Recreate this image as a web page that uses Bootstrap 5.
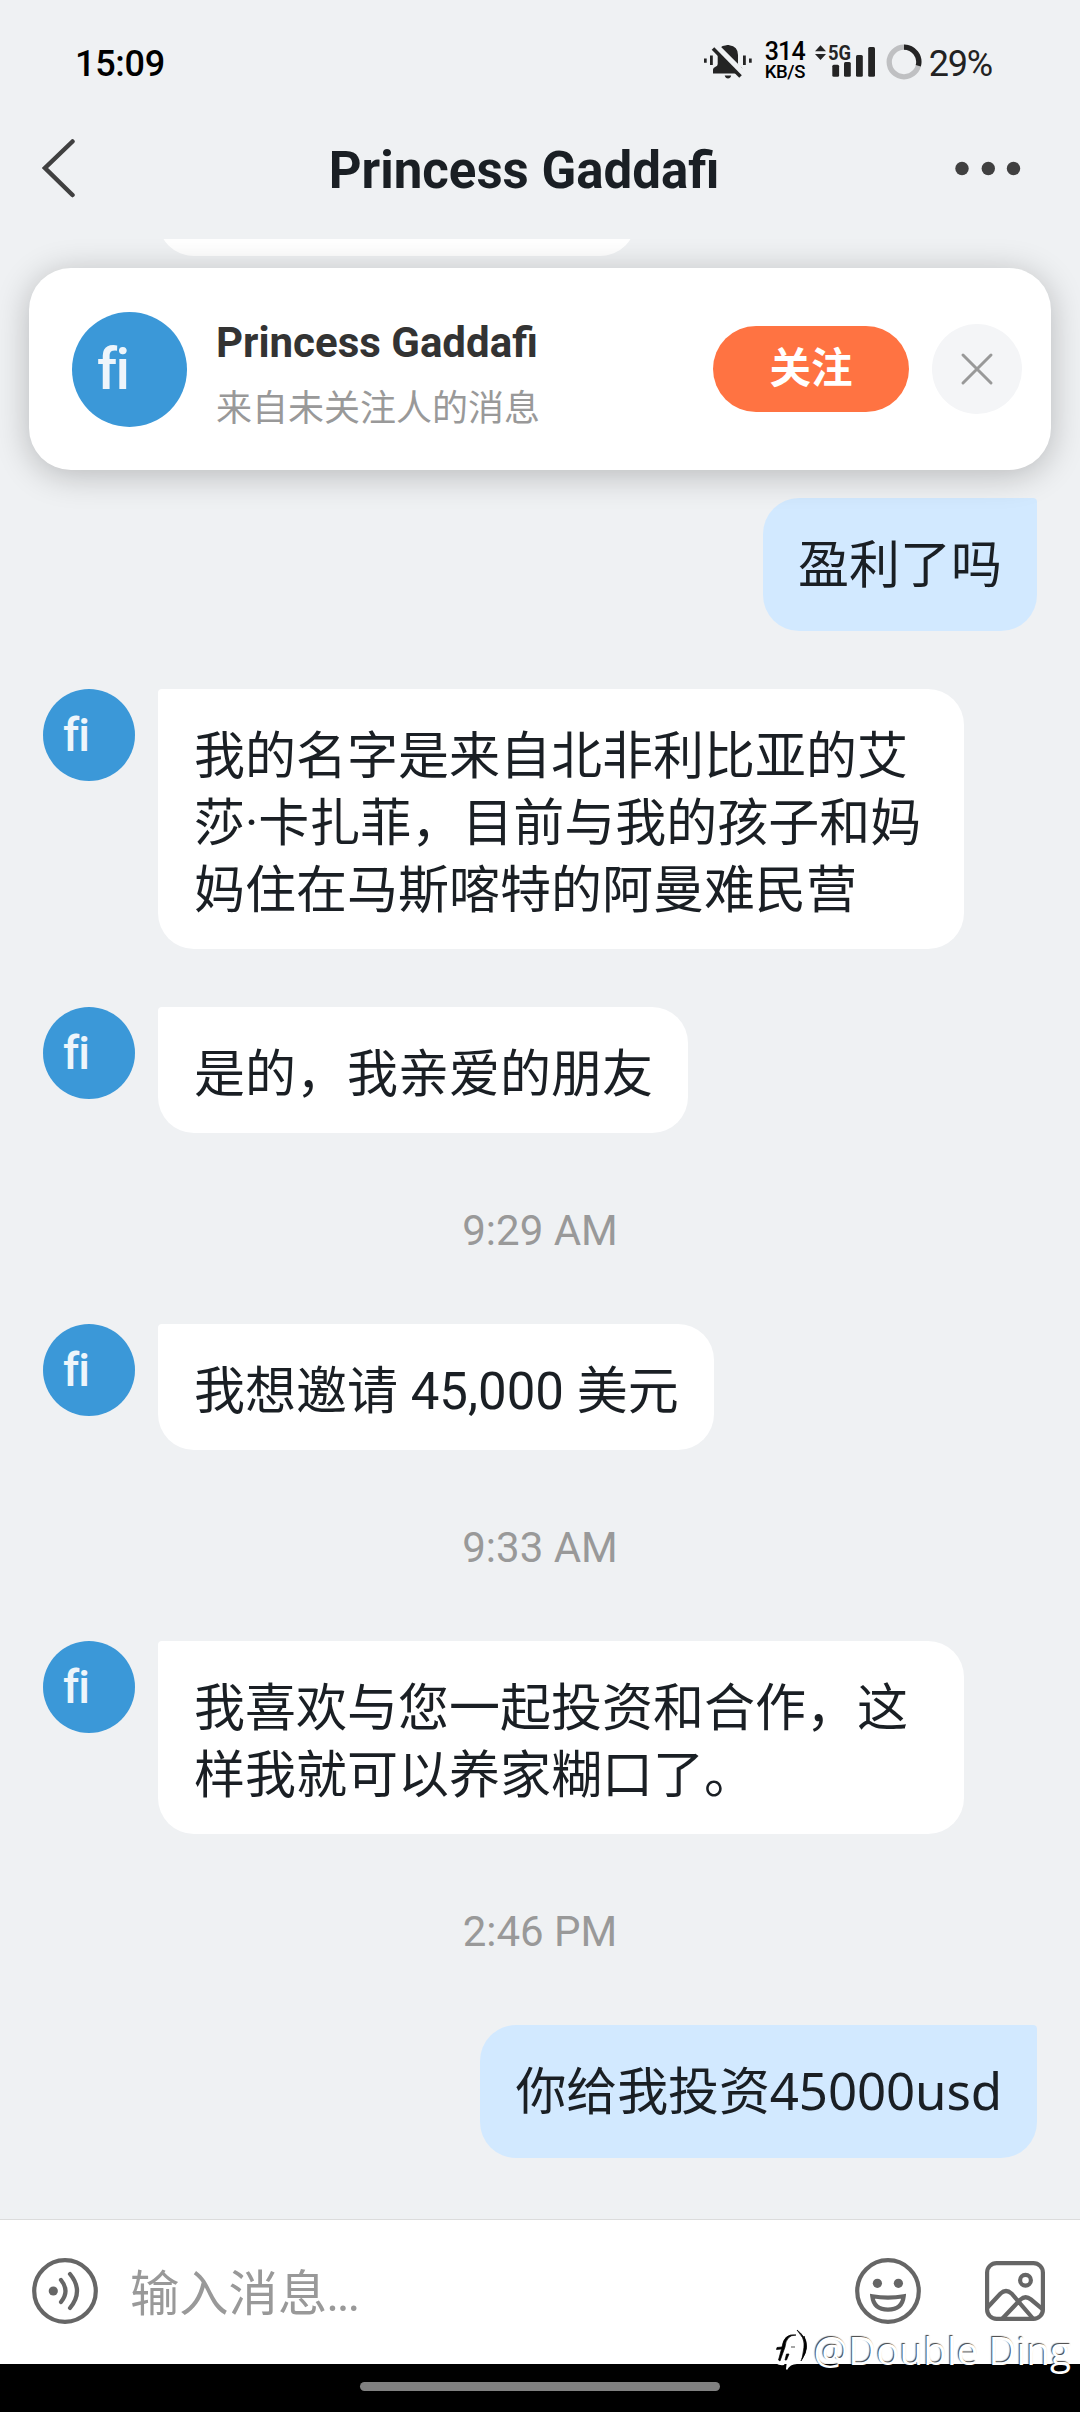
<!DOCTYPE html>
<html lang="zh-CN">
<head>
<meta charset="utf-8">
<meta name="viewport" content="width=device-width, initial-scale=1">
<title>Princess Gaddafi</title>
<link rel="stylesheet" href="https://cdn.jsdelivr.net/npm/bootstrap@5.3.0/dist/css/bootstrap.min.css">
<style>
  body { font-family: Roboto, "Noto Sans CJK SC", sans-serif; background: #eff1f3; color: #1a1f24; }
  svg { display: block; flex: none; }
  .phone { width: 1080px; height: 2412px; }
  .top-area { height: 239px; background: #eff1f3; }
  .status { height: 100px; padding: 23px 88px 0 75px; line-height: 1; }
  .clock { font-size: 36px; font-weight: 500; color: #000; letter-spacing: -.3px; padding-top: 4px; }
  .net { width: 50px; color: #000; font-weight: 500; margin-left: 13px; white-space: nowrap; }
  .net-num { font-size: 25px; line-height: 20px; letter-spacing: -.9px; }
  .net-unit { font-size: 18.5px; line-height: 20px; letter-spacing: -.4px; }
  .ring { margin: 0 7px 0 10px; }
  .pct { font-size: 36px; color: #222; letter-spacing: -1.2px; padding-top: 4px; }
  .titlebar { height: 139px; padding: 0 58px 2px 42px; }
  .titlebar h1 { font-size: 51px; font-weight: 700; line-height: 60px; color: #1a1f24; padding: 5px 0 0 18px; }
  .chat { height: 1980px; }
  .peek { width: 478px; height: 17px; margin-left: 158px; overflow: hidden; }
  .peek-in { height: 120px; border-radius: 36px; background: #fff; }
  .notice { width: 1022px; height: 202px; margin: 12px 0 28px 29px; padding: 0 29px 0 43px; border-radius: 42px; box-shadow: 0 5px 34px rgba(0,0,0,.24); background: #fff; position: relative; }
  .who { margin-left: 29px; padding-top: 13px; }
  .who-name { font-size: 42px; line-height: 50px; font-weight: 700; color: #333; }
  .who-sub { font-size: 36px; line-height: 50px; color: #999; margin-top: 16px; }
  .face { border-radius: 50%; background: #3b98d8; color: #eef5fb; font-variant-ligatures: none; flex: none; width: 92px; height: 92px; font-size: 46px; font-weight: 500; letter-spacing: -1px; line-height: 92px; padding-left: 20px; }
  .face-lg { width: 115px; height: 115px; font-size: 57px; line-height: 115px; padding-left: 25px; letter-spacing: -1.5px; }
  .follow { width: 196px; height: 86px; border-radius: 43px; background: #ff7342; color: #fff; font-size: 41.5px; line-height: 1; font-weight: 700; padding: 0; border: 0; }
  .dismiss { width: 90px; height: 90px; margin-left: 23px; background: #f4f5f7; border: 0; }
  .msg { margin-bottom: 58px; padding-left: 43px; gap: 23px; }
  .bubble { background: #fff; font-size: 51px; line-height: 67px; padding: 34px 35px 25px 36px; border-radius: 4px 36px 36px 36px; max-width: 806px; }
  .mine { padding: 0 43px 0 0; }
  .mine .bubble { background: #d2e9ff; border-radius: 36px 4px 36px 36px; padding: 32px 35px 34px; font-family: "Noto Sans", "Noto Sans CJK SC", sans-serif; }
  .tight { letter-spacing: -.12px; }
  .stamp { height: 75px; margin-bottom: 58px; font-size: 42px; line-height: 75px; color: #999; padding-top: 2px; }
  .composer { height: 145px; border-top: 1px solid #dcdcdc; background: #fff; padding: 0 35px 2px 32px; }
  .hint { font-size: 49.3px; color: #999; margin-left: 32px; line-height: 1; padding-top: 8px; }
  .hint span { letter-spacing: -2.4px; margin-left: -1px; }
  .navzone { height: 48px; background: #000; padding-top: 18px; }
  .pill { width: 360px; height: 9px; border-radius: 5px; background: #808080; }
  .stampmark { right: 9px; bottom: 32px; gap: 5px; color: #fff; font-family: "Open Sans", "Noto Sans", sans-serif; font-size: 38.7px; line-height: 60px; font-weight: 400; text-shadow: -1px -1px 1px rgba(0,0,0,.75); }
</style>
</head>
<body>
<main class="phone d-flex flex-column position-relative overflow-hidden">
  <header class="top-area position-relative">
    <div class="status d-flex align-items-center">
      <span class="clock me-auto">15:09</span>
      <svg width="48" height="36" viewBox="702 44 48 36" fill="#242424">
        <path d="M702 58.500h2.700v4.300H702zM708 55.500h2.800v9.500H708zM741 55.500h2.800v9.500H741zM747 58.500h2.700v4.300H747z"/>
        <path d="M711 73.500v-4q0-1.800 2.500-2.800 2.200-.8 2.200-2.700V55q0-9 8.800-9.700l.4-.3h2l.4.300Q736 46.500 736 55v9q0 2 2.200 2.800 2.300.9 2.300 2.600v4.100z"/>
        <path d="M722.700 75.500h6.500q-.7 3-3.200 3t-3.300-3z"/>
        <path d="M712 45.500l30 30" stroke="#eff1f3" stroke-width="8"/>
        <path d="M711 48.500l27.500 28" stroke="#242424" stroke-width="3.600"/>
      </svg>
      <span class="net d-flex flex-column"><span class="net-num">314</span><span class="net-unit">KB/S</span></span>
      <svg width="61" height="36" viewBox="814 44 61 36" fill="#242424">
        <path d="M814 51.300l5.500-6 5.500 6zM814 54l5.500 6 5.500-6z"/>
        <text x="827" y="60" font-family="Roboto" font-weight="700" font-size="20.500" textLength="23" lengthAdjust="spacingAndGlyphs">5G</text>
        <rect x="831.300" y="64.700" width="6.800" height="12" rx="1.500"/><rect x="843" y="62" width="6.800" height="14.700" rx="1.500"/>
        <rect x="855" y="55" width="6.800" height="21.700" rx="1.500"/><rect x="867.200" y="47" width="6.800" height="29.700" rx="1.500"/>
      </svg>
      <svg class="ring" width="36" height="36" viewBox="-18 -18 36 36" fill="none" stroke-width="5.300">
        <circle r="14.800" stroke="#bfc0c2"/><path d="M0-14.800A14.800 14.800 0 0 1 14.300 3.800" stroke="#242424"/>
      </svg>
      <span class="pct">29%</span>
    </div>
    <div class="titlebar d-flex align-items-center justify-content-between">
      <svg width="34" height="60" viewBox="42 139 34 60"><path d="M72.500 141.500L45 168l27.500 27" fill="none" stroke="#404040" stroke-width="4.500" stroke-linecap="round"/></svg>
      <h1 class="m-0">Princess Gaddafi</h1>
      <svg width="68" height="20" viewBox="954 158.500 68 20" fill="#404040"><circle cx="962" cy="168" r="6.700"/><circle cx="988.300" cy="168" r="6.700"/><circle cx="1013.500" cy="168" r="6.700"/></svg>
    </div>
  </header>

  <section class="chat overflow-hidden">
    <div class="peek d-flex flex-column justify-content-end"><div class="peek-in flex-shrink-0"></div></div>
    <div class="notice d-flex align-items-center">
      <div class="face face-lg">fi</div>
      <div class="who me-auto"><div class="who-name">Princess Gaddafi</div><div class="who-sub">来自未关注人的消息</div></div>
      <button class="btn follow">关注</button>
      <button class="btn dismiss rounded-circle p-0 d-flex align-items-center justify-content-center">
        <svg width="34" height="34" viewBox="0 0 34 34"><path d="M3 3l28 28m0-28l-28 28" stroke="#999" stroke-width="3" stroke-linecap="round"/></svg>
      </button>
    </div>

    <div class="msg mine d-flex justify-content-end"><div class="bubble">盈利了吗</div></div>
    <div class="msg d-flex"><div class="face">fi</div><div class="bubble">我的名字是来自北非利比亚的艾莎·卡扎菲，目前与我的孩子和妈妈住在马斯喀特的阿曼难民营</div></div>
    <div class="msg d-flex"><div class="face">fi</div><div class="bubble">是的，我亲爱的朋友</div></div>
    <div class="stamp text-center">9:29 AM</div>
    <div class="msg d-flex"><div class="face">fi</div><div class="bubble">我想邀请 45,000 美元</div></div>
    <div class="stamp text-center">9:33 AM</div>
    <div class="msg d-flex"><div class="face">fi</div><div class="bubble">我喜欢与您一起投资和合作，这样我就可以养家糊口了。</div></div>
    <div class="stamp text-center">2:46 PM</div>
    <div class="msg mine d-flex justify-content-end"><div class="bubble tight">你给我投资45000usd</div></div>
  </section>

  <footer>
    <div class="composer d-flex align-items-center">
      <svg width="66" height="66" viewBox="32 2258 66 66" fill="none" stroke="#666" stroke-width="4.200" stroke-linecap="round">
        <circle cx="65" cy="2291" r="30.800"/><circle cx="53.300" cy="2291" r="4.600" fill="#666" stroke="none"/>
        <path d="M61 2280q9 11 0 22M70 2274q14 17 0 34"/>
      </svg>
      <div class="hint me-auto">输入消息<span>...</span></div>
      <svg width="66" height="66" viewBox="855 2258 66 66" fill="none" stroke="#666" stroke-width="4.200">
        <circle cx="888" cy="2291" r="30.800"/><circle cx="877.400" cy="2283.300" r="4.600" fill="#666" stroke="none"/><circle cx="898.400" cy="2283.300" r="4.600" fill="#666" stroke="none"/>
        <path d="M872.300 2296.300q15.700 2.800 31.400 0-1.500 13.400-15.700 13.400t-15.700-13.400z"/>
      </svg>
      <svg width="60" height="60" viewBox="985 2261 60 60" style="margin-left:64px" fill="none" stroke="#666" stroke-width="4.200">
        <rect x="987.100" y="2263.100" width="55.800" height="55.800" rx="9.500"/><circle cx="1025.500" cy="2280.300" r="5.400"/>
        <path d="M987 2308l13.500-14.500q5.500-5 11 0l21.500 25M1002 2319l18.500-19.500q5-4.500 10.500 0l13 11"/>
      </svg>
    </div>
    <div class="navzone"><div class="pill mx-auto"></div></div>
  </footer>

  <div class="stampmark position-absolute d-flex align-items-center">
    <svg width="38" height="44" viewBox="771 2332 38 44">
      <path d="M772 2363l7-19q4-9 15-10 14 1 14 17 0 15-10 17-7 0-10 6l-1-1 1-9-3 5q-8 1-13-6z" fill="#fff"/>
      <path d="M797 2339q-10 0-11 12l-5 14-1.500-1 3-11-5 .5.500-2 5-.5q2-14 14-12zM798 2334q16 12 4 31 10-16-4-31zM805 2340q6 12-2 23 3-12 2-23zM790 2358l-2.500 6h-1.500l1.500-6zM792 2351h4" fill="#000" stroke="#000" stroke-width=".7"/>
    </svg>
    <span>@Double Ding</span>
  </div>
</main>
<script src="https://cdn.jsdelivr.net/npm/bootstrap@5.3.0/dist/js/bootstrap.bundle.min.js"></script>
</body>
</html>
